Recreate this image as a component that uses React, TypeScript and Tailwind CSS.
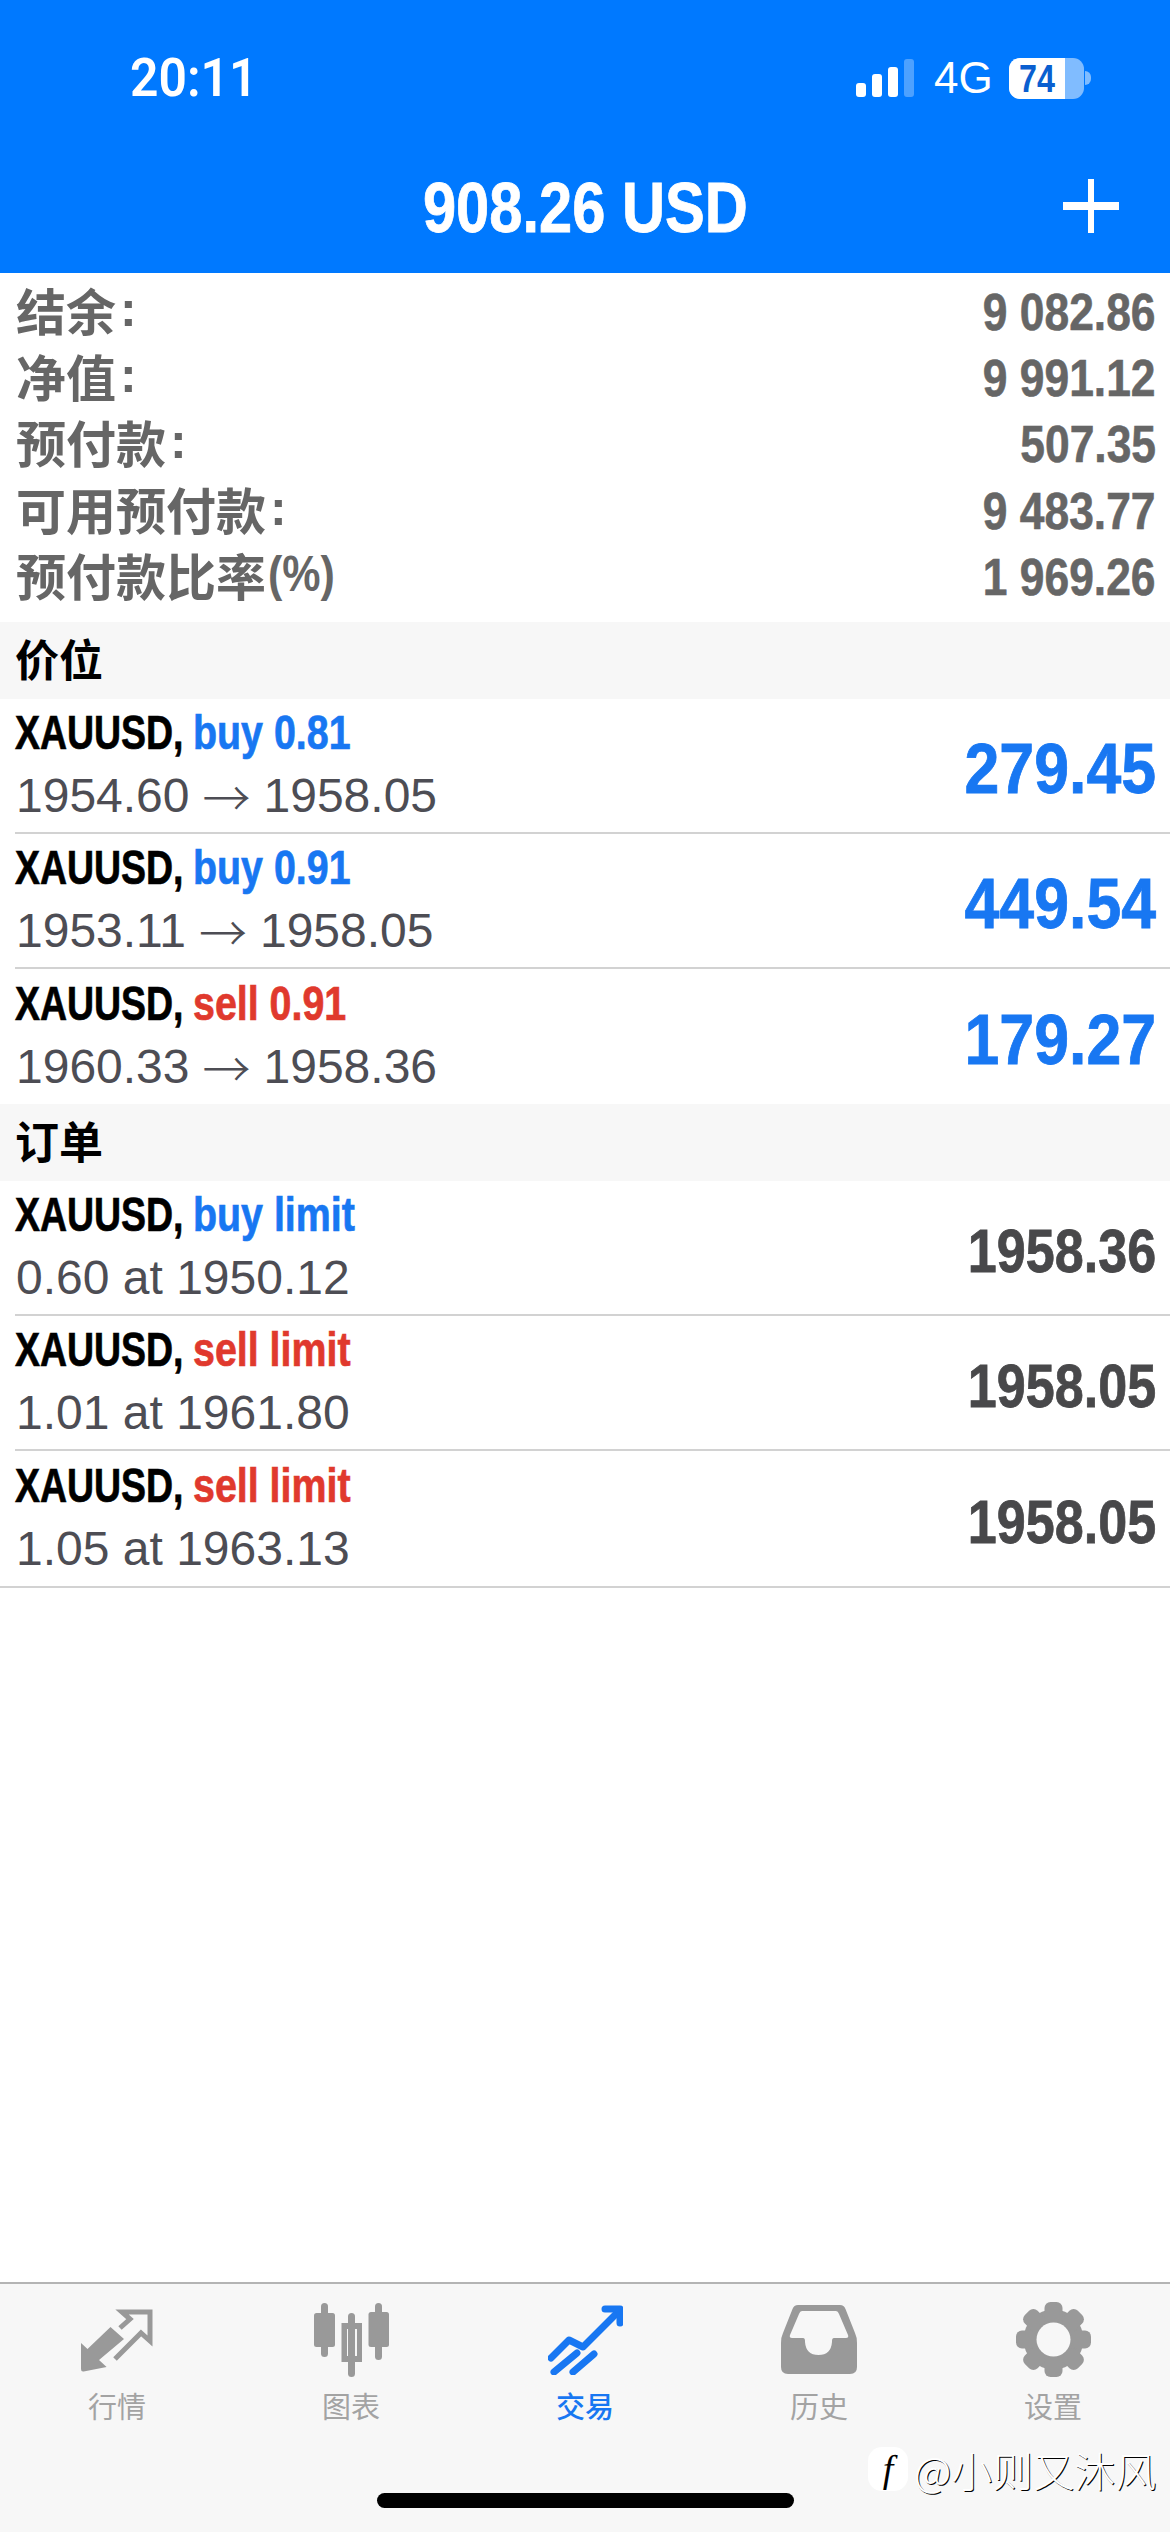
const SANS = "font-['Liberation_Sans','Noto_Sans_CJK_SC',sans-serif]";
const CJK = "font-['Noto_Sans_CJK_SC','Liberation_Sans',sans-serif]";

function Summary({ label, suffix, colon = true, value }: { label: string; suffix?: string; colon?: boolean; value: string }) {
  return (
    <div className="flex h-[66.3px] items-center justify-between pr-[14px] pl-[16px]">
      <div className={`${CJK} flex items-center pb-[5px] text-[50px] leading-none font-bold text-[#666666]`}>
        <span>{label}</span>
        {colon && <span className={`${SANS} ml-[4px] font-bold`}>:</span>}
        {suffix && <span className={`${SANS} ml-[2px] inline-block origin-left scale-x-[0.86] font-bold`}>{suffix}</span>}
      </div>
      <span className={`${SANS} inline-block origin-right scale-x-[0.87] pt-[2px] text-[51px] leading-none font-bold text-[#666666] [-webkit-text-stroke:0.6px]`}>{value}</span>
    </div>
  );
}

function SectionHead({ title }: { title: string }) {
  return (
    <div className={`${CJK} flex h-[77px] items-center bg-[#f7f7f7] pb-[5px] pl-[15px] text-[44px] leading-none font-bold text-black`}>{title}</div>
  );
}

function Row({ side, sideColor, from, arrow, to, value, valueClass, line = true }: { side: string; sideColor: string; from: string; arrow?: boolean; to?: string; value: string; valueClass: string; line?: boolean }) {
  return (
    <div className={`ml-[15px] flex h-[135px] items-center justify-between pr-[14px] ${line ? "border-b-2 border-[#d2d2d2]" : ""}`}>
      <div className="flex flex-col pb-[3px]">
        <div className={`${SANS} flex h-[63px] text-[48px] leading-[63px] font-bold whitespace-nowrap text-black [-webkit-text-stroke:0.7px]`}>
          <span className="inline-block w-[178px] origin-left scale-x-[0.78]">XAUUSD,</span>
          <span className={`inline-block origin-left scale-x-[0.82] ${sideColor}`}>{side}</span>
        </div>
        <div className={`${SANS} flex h-[63px] items-center pl-[1px] text-[48px] leading-[63px] whitespace-nowrap text-[#4d4d54]`}>
          <span>{from}</span>
          {arrow && <span className={`${CJK} mx-[13px] inline-block font-light`}>→</span>}
          {to && <span>{to}</span>}
        </div>
      </div>
      <span className={`${SANS} mt-[6px] inline-block origin-right font-bold [-webkit-text-stroke:0.8px] ${valueClass}`}>{value}</span>
    </div>
  );
}

const BLUE = "text-[#1877f2]";
const RED = "text-[#e0392d]";
const BIG = "scale-x-[0.895] text-[70px] leading-none text-[#1877f2]";
const DARK = "scale-x-[0.84] text-[62px] leading-none text-[#48484a]";

function QuotesIcon() {
  return (
    <svg width="72" height="64" viewBox="0 0 72 64">
      <path d="M0 35 L6.5 41 L29.5 19 L43 31 L18 52 L25.6 59 L2.7 63.5 Q0 64 0 61 Z" fill="#999999" />
      <path d="M39 20 L49 11 L41 4 H69 V33 L60 25 L34 51" fill="none" stroke="#999999" strokeWidth="5" />
    </svg>
  );
}

function ChartIcon() {
  return (
    <svg width="75" height="74" viewBox="0 0 75 74" fill="#999999">
      <rect x="7" y="0" width="7" height="54" rx="3.5" />
      <rect x="0" y="10" width="21" height="34" rx="2.5" />
      <rect x="34" y="10" width="7" height="64" rx="3.5" />
      <path fillRule="evenodd" d="M27.5 20 H48 V59 H27.5 Z M33 26 V53 H43 V26 Z" />
      <rect x="61" y="0" width="7" height="57" rx="3.5" />
      <rect x="54.5" y="9" width="20.5" height="35" rx="2.5" />
    </svg>
  );
}

function TradeIcon() {
  return (
    <svg width="75" height="70" viewBox="0 0 75 70" fill="none" stroke="#1877f2" strokeWidth="7" strokeLinecap="round" strokeLinejoin="round">
      <path d="M3 53 L21 35 L35 42 L71 6" />
      <path d="M57 4 H72 V18" />
      <path d="M6 67 L29 48" />
      <path d="M25 67 L46 49" />
    </svg>
  );
}

function HistoryIcon() {
  return (
    <svg width="76" height="70" viewBox="0 0 76 70">
      <path
        fillRule="evenodd"
        fill="#999999"
        d="M17 0 H59 Q63 0 64.5 4 L74 28 Q76 32 76 38 V62 Q76 69 69 69 H7 Q0 69 0 62 V38 Q0 32 2 28 L11.5 4 Q13 0 17 0 Z M21 6 Q19 6 18 9 L9 30 Q8 33 11 33 H22 Q24 33 24 36 V37 Q25 50 37.5 50 Q50 50 51 37 V36 Q51 33 53 33 H65 Q68 33 67 30 L58 9 Q57 6 55 6 Z"
      />
    </svg>
  );
}

function GearIcon() {
  const angles = [0, 45, 90, 135, 180, 225, 270, 315];
  return (
    <svg width="75" height="75" viewBox="0 0 75 75" fill="#999999">
      <circle cx="37.5" cy="37.5" r="30" />
      {angles.map((a) => (
        <rect key={a} x="28.5" y="0" width="18" height="20" rx="6" transform={`rotate(${a} 37.5 37.5)`} />
      ))}
      <circle cx="37.5" cy="37.5" r="17" fill="#f7f7f7" />
    </svg>
  );
}

function Tab({ label, active, children }: { label: string; active?: boolean; children: React.ReactNode }) {
  return (
    <div className="flex flex-col items-center">
      <div className="flex h-[75px] items-center justify-center">{children}</div>
      <div className={`${CJK} mt-[12px] text-[29px] leading-[32px] ${active ? "font-medium text-[#1877f2]" : "text-[#a3a3a3]"}`}>{label}</div>
    </div>
  );
}

export default function App() {
  return (
    <div className="relative flex h-[2532px] w-[1170px] flex-col overflow-hidden bg-white">
      <header className="h-[273px] shrink-0 bg-[#0079ff] text-white">
        <div className="flex h-[156px] items-center justify-between pr-[79px] pl-[130px]">
          <span className="inline-block origin-left scale-x-[0.94] font-['Roboto',sans-serif] text-[53px] leading-none font-semibold">20:11</span>
          <div className="flex items-center">
            <div className="flex h-[38px] items-end gap-[6px]">
              <div className="h-[14px] w-[10px] rounded-[3px] bg-white" />
              <div className="h-[23px] w-[10px] rounded-[3px] bg-white" />
              <div className="h-[30px] w-[10px] rounded-[3px] bg-white" />
              <div className="h-[38px] w-[10px] rounded-[3px] bg-white/30" />
            </div>
            <span className={`${SANS} ml-[20px] inline-block w-[56px] text-[44px] leading-none`}>4G</span>
            <div className="relative ml-[19px] h-[41px] w-[75px] overflow-hidden rounded-[11px] bg-white/50">
              <div className="h-full w-[56px] bg-white" />
              <span className={`${SANS} absolute top-[1px] left-[10px] inline-block origin-left scale-x-[0.85] text-[38px] leading-[40px] font-bold text-[#0a5fd0]`}>74</span>
            </div>
            <div className="ml-[1px] h-[14px] w-[6px] rounded-r-full bg-white/50" />
          </div>
        </div>
        <div className="relative flex h-[103px] items-center justify-center">
          <span className={`${SANS} inline-block scale-x-[0.84] text-[71px] leading-none font-bold whitespace-nowrap [-webkit-text-stroke:0.8px]`}>908.26 USD</span>
          <div className="absolute top-[23px] left-[1063px] h-[54px] w-[56px]">
            <div className="absolute top-0 left-[25px] h-[54px] w-[6px] bg-white" />
            <div className="absolute top-[23px] left-0 h-[8px] w-[56px] bg-white" />
          </div>
        </div>
      </header>

      <section className="h-[349px] shrink-0 pt-[5px]">
        <Summary label="结余" value="9 082.86" />
        <Summary label="净值" value="9 991.12" />
        <Summary label="预付款" value="507.35" />
        <Summary label="可用预付款" value="9 483.77" />
        <Summary label="预付款比率" suffix="(%)" colon={false} value="1 969.26" />
      </section>

      <SectionHead title="价位" />
      <Row side="buy 0.81" sideColor={BLUE} from="1954.60" arrow to="1958.05" value="279.45" valueClass={BIG} />
      <Row side="buy 0.91" sideColor={BLUE} from="1953.11" arrow to="1958.05" value="449.54" valueClass={BIG} />
      <Row side="sell 0.91" sideColor={RED} from="1960.33" arrow to="1958.36" value="179.27" valueClass={BIG} line={false} />

      <SectionHead title="订单" />
      <Row side="buy limit" sideColor={BLUE} from="0.60 at 1950.12" value="1958.36" valueClass={DARK} />
      <Row side="sell limit" sideColor={RED} from="1.01 at 1961.80" value="1958.05" valueClass={DARK} />
      <Row side="sell limit" sideColor={RED} from="1.05 at 1963.13" value="1958.05" valueClass={DARK} line={false} />
      <div className="h-[2px] shrink-0 bg-[#d2d2d2]" />

      <div className="flex-1" />

      <nav className="grid h-[250px] shrink-0 grid-cols-5 border-t-2 border-[#b4b4b4] bg-[#f7f7f7] pt-[18px]">
        <Tab label="行情"><QuotesIcon /></Tab>
        <Tab label="图表"><ChartIcon /></Tab>
        <Tab label="交易" active><TradeIcon /></Tab>
        <Tab label="历史"><HistoryIcon /></Tab>
        <Tab label="设置"><GearIcon /></Tab>
      </nav>

      <div className="absolute bottom-[24px] left-[377px] h-[15px] w-[417px] rounded-full bg-black" />

      <div className="absolute top-[2445px] left-[868px] flex items-center">
        <div className="flex h-[44px] w-[40px] items-center justify-center rounded-[14px] bg-white font-['Liberation_Serif',serif] text-[38px] leading-none text-black italic">f</div>
        <span className={`${CJK} ml-[6px] text-[41px] leading-[48px] font-light whitespace-nowrap text-white [text-shadow:1px_1px_0_#000]`}>@小则又沐风</span>
      </div>
    </div>
  );
}
